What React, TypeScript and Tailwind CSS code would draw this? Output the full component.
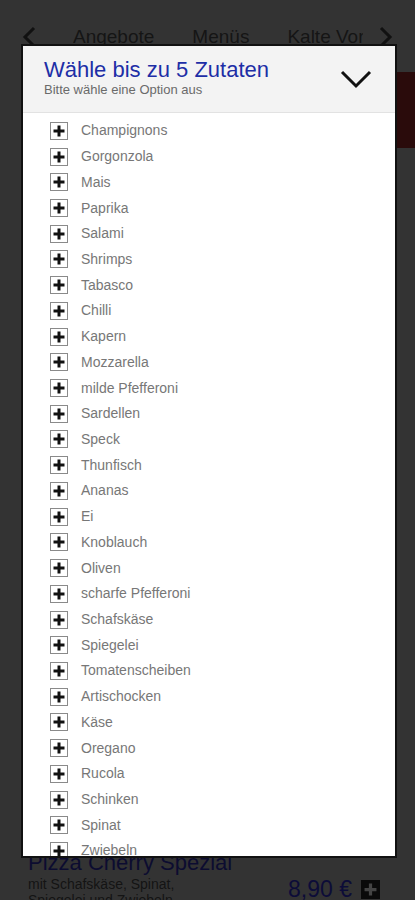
import React from 'react';

const ZUTATEN = [
  'Champignons', 'Gorgonzola', 'Mais', 'Paprika', 'Salami', 'Shrimps', 'Tabasco', 'Chilli',
  'Kapern', 'Mozzarella', 'milde Pfefferoni', 'Sardellen', 'Speck', 'Thunfisch', 'Ananas', 'Ei',
  'Knoblauch', 'Oliven', 'scharfe Pfefferoni', 'Schafskäse', 'Spiegelei', 'Tomatenscheiben',
  'Artischocken', 'Käse', 'Oregano', 'Rucola', 'Schinken', 'Spinat', 'Zwiebeln',
];

const PlusBox: React.FC = () => (
  <span className="flex h-[18px] w-[18px] shrink-0 items-center justify-center border border-[#8a8a8a] bg-white">
    <svg width="12" height="12" viewBox="0 0 12 12">
      <path d="M4.5 0.5h3v4h4v3h-4v4h-3v-4h-4v-3h4z" fill="#111" />
    </svg>
  </span>
);

export default function App() {
  return (
    <div className="relative h-[900px] w-full overflow-hidden bg-[#333333] font-['Liberation_Sans',Arial,sans-serif]">
      {/* Dimmed page behind the dialog */}
      <div className="flex h-[72px] items-start pt-[23px]">
        <div className="flex w-full items-center px-[22px] text-[19px] text-[#151515]">
          <svg width="14" height="22" viewBox="0 0 14 22" className="shrink-0">
            <path d="M12 2 L3 11 L12 20" stroke="#111" strokeWidth="3" fill="none" />
          </svg>
          <div className="ml-[37px] flex w-[290px] gap-[38px] overflow-hidden whitespace-nowrap">
            <span>Angebote</span>
            <span>Menüs</span>
            <span>Kalte Vorspeisen</span>
          </div>
          <svg width="14" height="22" viewBox="0 0 14 22" className="ml-auto shrink-0">
            <path d="M2 2 L11 11 L2 20" stroke="#111" strokeWidth="3" fill="none" />
          </svg>
        </div>
      </div>
      <div className="flex justify-end">
        <div className="h-[76px] w-[18px] bg-[#2a0b0b]" />
      </div>

      <div className="absolute left-0 right-0 top-[849px] px-[28px]">
        <div className="text-[22px] leading-[27px] text-[#0c0c30]">Pizza Cherry Spezial</div>
        <div className="flex items-start justify-between">
          <div className="text-[14px] leading-[16px] text-[#141414]">
            mit Schafskäse, Spinat,
            <br />
            Spiegelei und Zwiebeln
          </div>
          <div className="mr-[7px] mt-[1px] flex items-center gap-[9px]">
            <span className="text-[23px] leading-[24px] text-[#0c0c38]">8,90 €</span>
            <span className="flex h-[19px] w-[19px] items-center justify-center bg-[#0a0a0a]">
              <svg width="13" height="13" viewBox="0 0 12 12">
                <path d="M4.5 0.5h3v4h4v3h-4v4h-3v-4h-4v-3h4z" fill="#444" />
              </svg>
            </span>
          </div>
        </div>
      </div>

      {/* Dialog */}
      <div className="absolute left-[21px] top-[44px] flex h-[814px] w-[376px] flex-col overflow-hidden border-2 border-[#111] bg-white">
        <div className="flex h-[67px] shrink-0 items-center justify-between border-b border-[#e2e2e2] bg-[#f3f3f3] pl-[21px] pr-[22px]">
          <div className="-mt-[4px]">
            <div className="text-[22px] leading-[24px] text-[#1d2ea6]">Wähle bis zu 5 Zutaten</div>
            <div className="text-[13px] leading-[15px] text-[#6a6a6a]">Bitte wähle eine Option aus</div>
          </div>
          <svg width="34" height="22" viewBox="0 0 34 22" className="-mt-[1px]">
            <path d="M3 4 L17 18 L31 4" stroke="#111" strokeWidth="3" fill="none" />
          </svg>
        </div>
        <ul className="pt-[5px]">
          {ZUTATEN.map((z) => (
            <li key={z} className="flex h-[25.72px] items-center gap-[13px] pl-[27px]">
              <PlusBox />
              <span className="text-[14px] text-[#777]">{z}</span>
            </li>
          ))}
        </ul>
      </div>
    </div>
  );
}
